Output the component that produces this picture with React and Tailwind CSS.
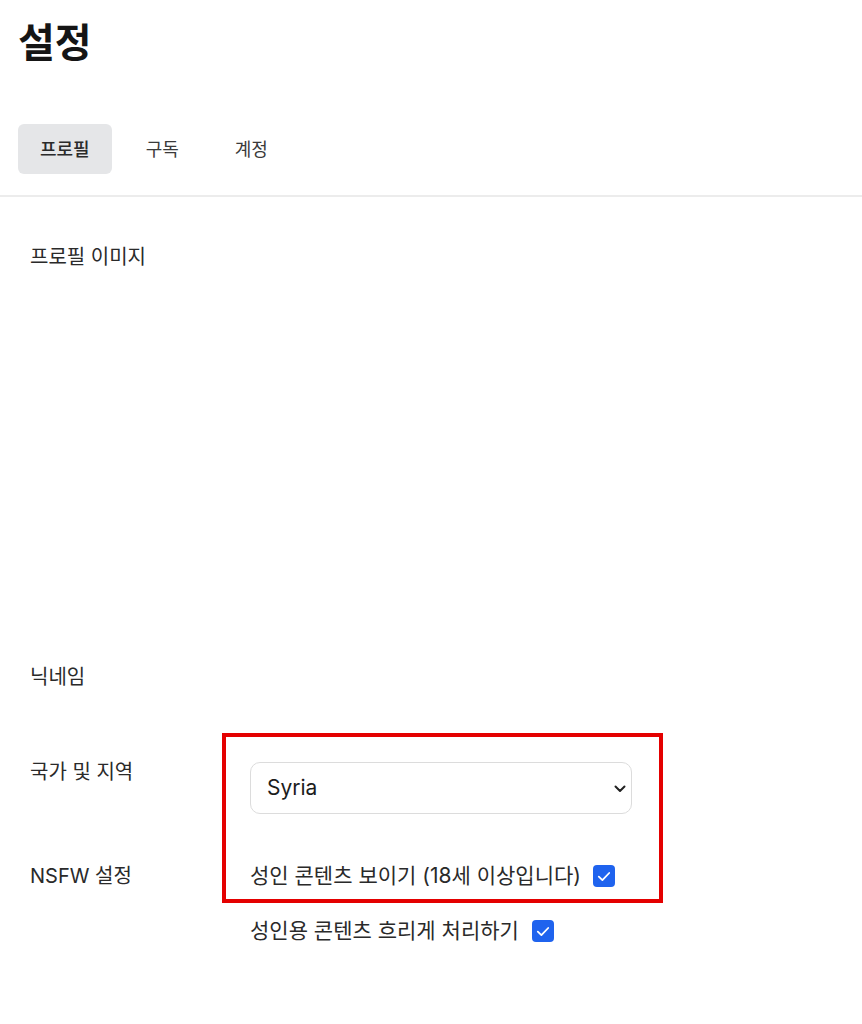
import { useState } from "react";

const font = { fontFamily: 'Inter, "Noto Sans CJK KR", sans-serif' };

function Check({ checked, onChange }) {
  return (
    <button
      type="button"
      onClick={onChange}
      className={`w-[22px] h-[22px] rounded-[4px] flex items-center justify-center shrink-0 ${checked ? "bg-[#1f63ee]" : "bg-white border border-gray-400"}`}
    >
      {checked && (
        <svg width="14" height="11" viewBox="0 0 14 11" fill="none">
          <path d="M1.8 5.6l3.6 3.5L12.2 2" stroke="white" strokeWidth="1.8" strokeLinecap="round" strokeLinejoin="round" />
        </svg>
      )}
    </button>
  );
}

export default function App() {
  const [tab, setTab] = useState("프로필");
  const [showAdult, setShowAdult] = useState(true);
  const [blurAdult, setBlurAdult] = useState(true);
  const [country, setCountry] = useState("Syria");

  const tabs = ["프로필", "구독", "계정"];

  return (
    <div className="relative min-h-screen bg-white text-[#2a2a2a]" style={font}>
      {/* 헤더 + 탭 */}
      <div className="border-b-2 border-[#ececec] pb-[21px]">
        <h1 className="pl-[18px] pt-[23px] text-[40px] leading-10 font-bold text-[#151515]">설정</h1>
        <div className="flex gap-3 pl-[18px] mt-[61px]">
          {tabs.map((t) => (
            <button
              key={t}
              onClick={() => setTab(t)}
              className={`h-[50px] px-[22px] rounded-md text-[18px] ${tab === t ? "bg-[#e5e6e8] text-[#2a2a2a] font-medium" : "text-[#3a3a3a]"}`}
            >
              {t}
            </button>
          ))}
        </div>
      </div>

      {/* 프로필 설정 */}
      <div className="px-[30px] pt-[46px] text-[20px] leading-7">
        <div className="flex">
          <div className="w-[220px]">프로필 이미지</div>
          <div className="h-[420px]"></div>
        </div>

        <div className="flex">
          <div className="w-[220px]">닉네임</div>
        </div>

        <div className="flex items-start mt-[67px]">
          <div className="w-[220px]">국가 및 지역</div>
          <div className="relative mt-[4px] w-[382px]">
            <select
              value={country}
              onChange={(e) => setCountry(e.target.value)}
              className="appearance-none w-full h-[52px] rounded-[10px] border border-[#dcdcdc] bg-white pl-4 text-[21px] text-[#1c1c1c] outline-none"
            >
              <option>Syria</option>
              <option>South Korea</option>
              <option>Japan</option>
            </select>
            <svg className="pointer-events-none absolute right-[6px] top-[23px]" width="12" height="8" viewBox="0 0 12 8" fill="none">
              <path d="M1.5 1.5L6 6l4.5-4.5" stroke="#222" strokeWidth="2" strokeLinecap="round" strokeLinejoin="round" />
            </svg>
          </div>
        </div>

        <div className="flex items-start mt-[48px]">
          <div className="w-[220px]">NSFW 설정</div>
          <div className="flex flex-col gap-[27px] text-[21px]">
            <div className="flex items-center gap-3">
              <span>성인 콘텐츠 보이기 (18세 이상입니다)</span>
              <Check checked={showAdult} onChange={() => setShowAdult(!showAdult)} />
            </div>
            <div className="flex items-center gap-[13px]">
              <span>성인용 콘텐츠 흐리게 처리하기</span>
              <Check checked={blurAdult} onChange={() => setBlurAdult(!blurAdult)} />
            </div>
          </div>
        </div>
      </div>

      {/* 강조 표시 */}
      <div className="pointer-events-none absolute left-[222px] top-[733px] w-[441px] h-[170px] border-4 border-[#e40000]"></div>
    </div>
  );
}
